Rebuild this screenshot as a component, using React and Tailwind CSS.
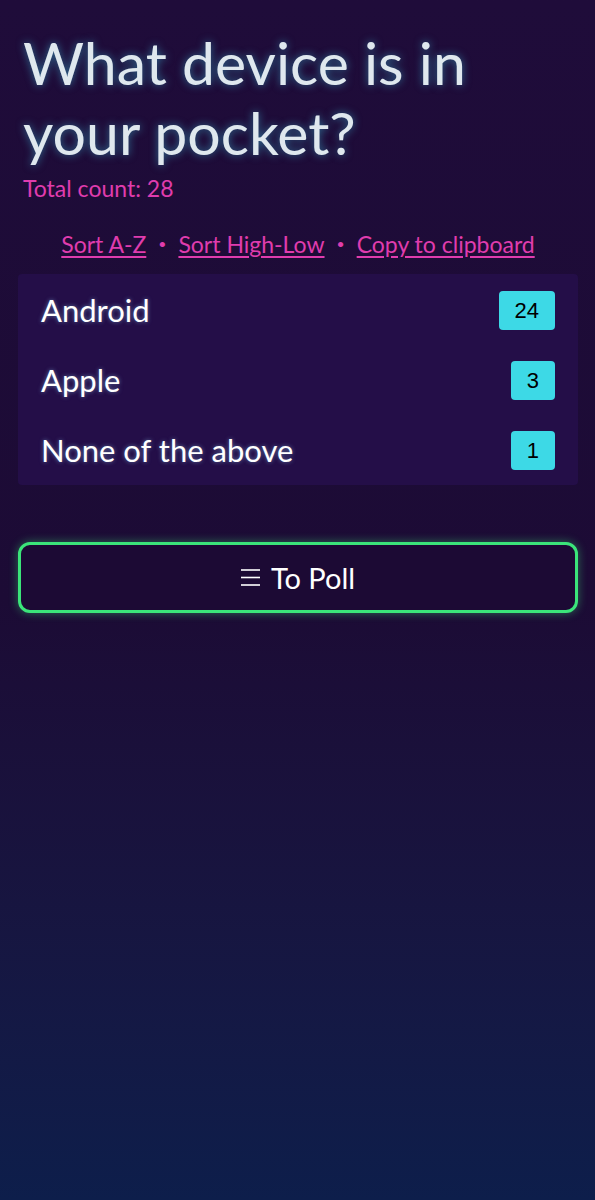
import React from 'react';

const results = [
  { label: 'Android', count: 24 },
  { label: 'Apple', count: 3 },
  { label: 'None of the above', count: 1 },
];

const Dot = () => <span className="mx-[12px] text-[14px] text-[#e03cae]">•</span>;

export default function App() {
  return (
    <div
      className="min-h-[1200px] w-full bg-gradient-to-b from-[#1f0c3a] via-[#1c0b35] to-[#0d1e4b] pl-[18px] pr-[17px] pt-[28px]"
      style={{ fontFamily: 'Lato, "Noto Sans", sans-serif' }}
    >
      <h1 className="pl-[5px] text-[59px] leading-[70px] text-[#dfe8ee] [text-shadow:0_0_8px_rgba(64,200,230,0.55)]">
        What device is in your pocket?
      </h1>
      <p className="mt-[6px] pl-[5px] text-[23px] leading-[28px] text-[#e03cae]">Total count: 28</p>

      <div className="mt-[26px] flex items-center justify-center text-[23px] leading-[32px] text-[#e03cae]">
        <a className="underline underline-offset-[3px]">Sort A-Z</a>
        <Dot />
        <a className="underline underline-offset-[3px]">Sort High-Low</a>
        <Dot />
        <a className="underline underline-offset-[3px]">Copy to clipboard</a>
      </div>

      <div className="mt-[14px] rounded-[4px] bg-[#240e48] px-[23px] pt-[1px]">
        {results.map((r) => (
          <div key={r.label} className="flex h-[70px] items-center justify-between">
            <span className="text-[31px] text-white [text-shadow:0_0_4px_rgba(150,220,255,0.5)]">{r.label}</span>
            <span
              className="flex h-[39px] min-w-[44px] items-center justify-center rounded-[4px] bg-[#3dd9e6] px-[16px] text-[22px] text-black"
              style={{ fontFamily: '"Liberation Sans", Arial, sans-serif' }}
            >
              {r.count}
            </span>
          </div>
        ))}
      </div>

      <button className="mt-[57px] flex h-[71px] w-full items-center justify-center gap-[11px] rounded-[12px] border-[3px] border-[#3be57a] bg-[#1c0a34] text-[29px] text-white shadow-[0_0_10px_rgba(59,229,122,0.45)]">
        <svg width="19" height="17" viewBox="0 0 19 17" fill="none" stroke="white" strokeWidth="1.6">
          <line x1="0" y1="1" x2="19" y2="1" />
          <line x1="0" y1="8.5" x2="19" y2="8.5" />
          <line x1="0" y1="16" x2="19" y2="16" />
        </svg>
        <span>To Poll</span>
      </button>
    </div>
  );
}
